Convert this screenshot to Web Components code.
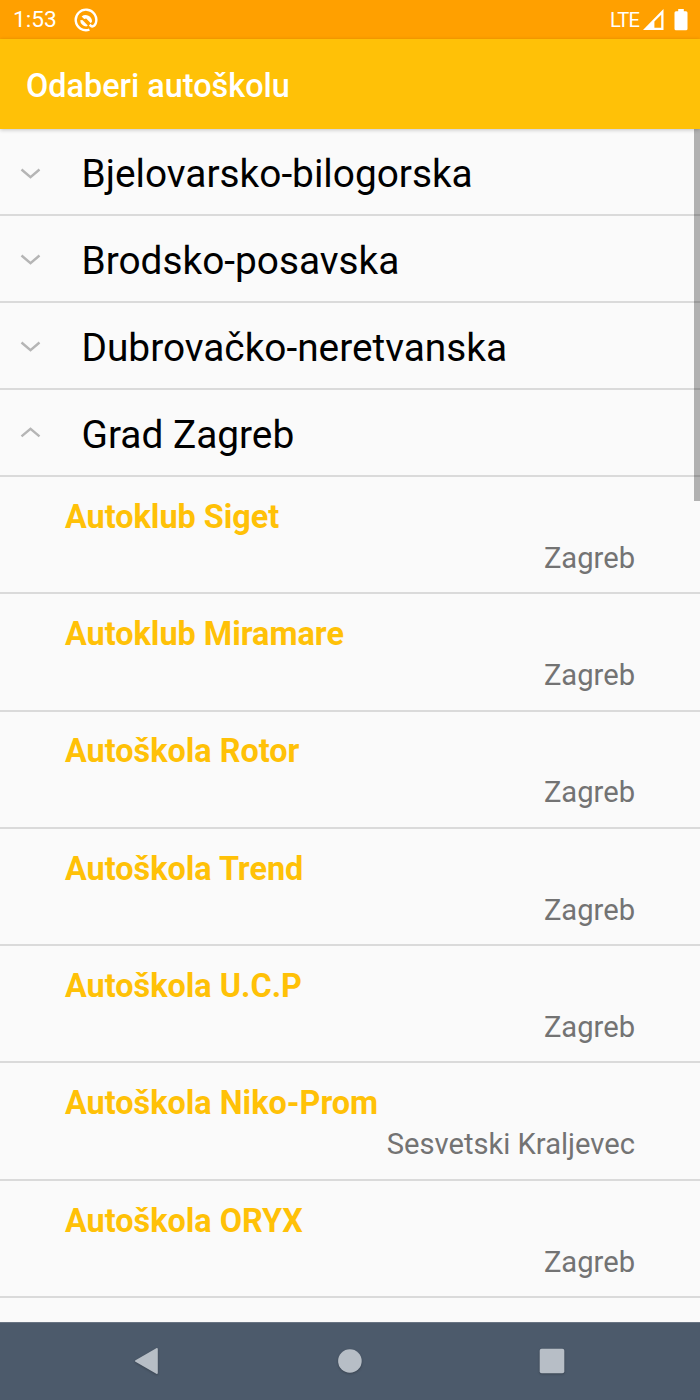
<!DOCTYPE html>
<html lang="hr">
<head>
<meta charset="utf-8">
<title>Odaberi autoškolu</title>
<style>
html,body{margin:0;height:100%;overflow:hidden;background:#fafafa;font-family:Roboto,"Noto Sans",sans-serif}
</style>
</head>
<body>
<school-picker></school-picker>
<script>
class Base extends HTMLElement {
  connectedCallback() {
    if (this.shadowRoot) return;
    const t = document.createElement('template');
    t.innerHTML = this.render();
    this.attachShadow({mode: 'open'}).append(t.content.cloneNode(true));
  }
}

customElements.define('status-bar', class extends Base {
  render() {
    return `<style>
      :host{display:flex;align-items:center;height:39px;flex:none;box-sizing:border-box;background:#ffa000;color:#fff;padding:0 12px 0 13px;font-size:22.7px}
      .app{margin-left:17px}
      .net{margin-left:auto;font-size:20.2px;letter-spacing:-.9px}
      svg{display:block;flex:none}
    </style>
    <span>1:53</span>
    <svg class="app" width="24" height="24" viewBox="0 0 24 24" fill="none" stroke="#fff">
      <path d="M15.4 21.7A10.3 10.3 0 1 1 21.8 15.2Q20.6 18.8 17.6 18.4L15.6 16.8" stroke-width="2.4"/>
      <path d="M7.6 8.4A6.4 6.4 0 0 1 18 13.6L16.8 15.2 12.2 10.6 10.2 11Z" fill="#fff" stroke="none"/>
      <path d="M6.2 12.2 8.4 12 13.8 17.4 12.4 18.6A6.6 6.6 0 0 1 6.2 12.2Z" fill="#fff" stroke="none"/>
    </svg>
    <span class="net">LTE</span>
    <svg width="21" height="22" viewBox="0 0 21 22" style="margin-left:4px"><path fill="#fff" fill-rule="evenodd" d="M20.5 0V21H0ZM18.2 5.8 11.4 12.6V18.7H18.2Z"/></svg>
    <svg width="14" height="22" viewBox="0 0 14 22" style="margin-left:10px"><path fill="#fff" d="M4.2 0H9.8V2.2H12Q13.5 2.2 13.5 3.7V19.8Q13.5 21.3 12 21.3H2Q.5 21.3 .5 19.8V3.7Q.5 2.2 2 2.2H4.2Z"/></svg>`;
  }
});

customElements.define('app-bar', class extends Base {
  render() {
    return `<style>
      :host{display:flex;align-items:center;flex:none;height:90px;box-sizing:border-box;padding:4px 26px 0;background:#ffc107;color:#fff;font-size:32.4px;font-weight:500;box-shadow:0 1px 4px rgba(0,0,0,.22);z-index:1}
    </style><span><slot></slot></span>`;
  }
});

customElements.define('county-row', class extends Base {
  render() {
    const d = this.hasAttribute('open') ? 'M1.5 8.4 10.5 .9 19.5 8.4' : 'M1.5 1.5 10.5 9.2 19.5 1.5';
    return `<style>
      :host{display:flex;align-items:center;flex:none;height:86.85px;box-sizing:border-box;padding:3px 0 0 20px;border-bottom:2px solid #dadada;color:#000;font-size:38.8px}
      svg{flex:none;margin-right:40.5px;overflow:visible}
    </style>
    <svg width="21" height="12" viewBox="0 0 21 12" fill="none" stroke="#b5b5b5" stroke-width="2.4"><path d="${d}"/></svg>
    <span><slot></slot></span>`;
  }
});

customElements.define('school-row', class extends Base {
  render() {
    return `<style>
      :host{display:flex;flex-direction:column;flex:none;height:117.3px;box-sizing:border-box;padding:19.8px 65px 0;border-bottom:2px solid #dadada}
      .name{color:#ffc107;font-weight:700;font-size:32.4px;line-height:40px}
      .city{color:#737373;font-size:29.15px;line-height:40px;margin-top:1px;text-align:right}
    </style>
    <div class="name"><slot></slot></div>
    <div class="city"><slot name="city"></slot></div>`;
  }
});

customElements.define('scroll-thumb', class extends Base {
  render() {
    return `<style>:host{display:block;position:absolute;top:0;right:0;width:6.5px;height:371.5px;background:rgba(0,0,0,.29)}</style>`;
  }
});

customElements.define('nav-bar', class extends Base {
  render() {
    return `<style>
      :host{display:grid;grid-template-columns:repeat(3,202.5px);justify-content:center;align-items:center;justify-items:center;flex:none;height:78px;box-sizing:border-box;padding:0 1px 2px 0;background:#4c5a6b;border-top:1px solid #697483}
      svg{display:block;filter:drop-shadow(0 1px 1px rgba(0,0,0,.25))}
    </style>
    <svg width="26" height="28" viewBox="0 0 26 28"><path d="M2 14 22.8 2V26Z" fill="#b7bec6" stroke="#b7bec6" stroke-width="2" stroke-linejoin="round"/></svg>
    <svg width="26" height="28" viewBox="0 0 26 28"><circle cx="12.9" cy="14" r="11.8" fill="#b7bec6"/></svg>
    <svg width="26" height="28" viewBox="0 0 26 28"><rect x=".7" y="1.7" width="24.6" height="24.6" rx="2" fill="#b7bec6"/></svg>`;
  }
});

customElements.define('school-picker', class extends Base {
  render() {
    const school = (n, c = 'Zagreb') => `<school-row>${n}<span slot="city">${c}</span></school-row>`;
    return `<style>
      :host{display:flex;flex-direction:column;width:700px;height:1400px;background:#fafafa}
      main{position:relative;flex:1;min-height:0;overflow:hidden;display:flex;flex-direction:column;box-sizing:border-box;padding-top:.6px}
    </style>
    <status-bar></status-bar>
    <app-bar>Odaberi autoškolu</app-bar>
    <main>
      <county-row>Bjelovarsko-bilogorska</county-row>
      <county-row>Brodsko-posavska</county-row>
      <county-row>Dubrovačko-neretvanska</county-row>
      <county-row open>Grad Zagreb</county-row>
      ${school('Autoklub Siget')}
      ${school('Autoklub Miramare')}
      ${school('Autoškola Rotor')}
      ${school('Autoškola Trend')}
      ${school('Autoškola U.C.P')}
      ${school('Autoškola Niko-Prom', 'Sesvetski Kraljevec')}
      ${school('Autoškola ORYX')}
      <scroll-thumb></scroll-thumb>
    </main>
    <nav-bar></nav-bar>`;
  }
});
</script>
</body>
</html>
